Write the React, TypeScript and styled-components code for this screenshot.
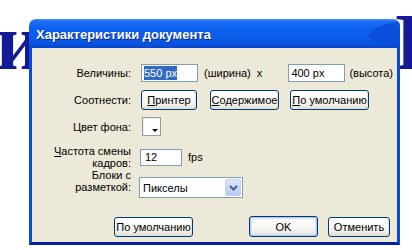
import styled, { createGlobalStyle } from 'styled-components';

const GlobalStyle = createGlobalStyle`
  *, *::before, *::after { box-sizing: border-box; }
  html, body { margin: 0; padding: 0; background: #fff; }
  body {
    font-family: "Liberation Sans", Arial, sans-serif;
    font-size: 11px;
    color: #000;
    overflow: hidden;
  }
`;

const Page = styled.div`
  position: relative;
  width: 412px;
  height: 250px;
  overflow: hidden;
`;

// big heading of the page behind the dialog
const Backdrop = styled.h1`
  display: flex;
  justify-content: space-between;
  margin: 2px 0 0;
  font-family: "Liberation Serif", "Times New Roman", serif;
  font-weight: bold;
  font-size: 80px;
  line-height: 80px;
  color: #141a96;
  span:first-child { margin-left: -4px; }
  span:last-child { margin-right: -32px; }
`;

const Window = styled.div`
  position: absolute;
  left: 29px;
  top: 19px;
  width: 371px;
  display: flex;
  flex-direction: column;
`;

const TitleBar = styled.div`
  position: relative;
  height: 29px;
  display: flex;
  align-items: center;
  padding-left: 7px;
  border-radius: 7px 7px 0 0;
  overflow: hidden;
  background: linear-gradient(
    to bottom,
    #4a93f8 0%,
    #1d6ff3 8%,
    #0d62ef 30%,
    #0a5ae8 70%,
    #0850dc 90%,
    #0743c6 100%
  );
`;

const TitleText = styled.span`
  position: relative;
  font-size: 13px;
  font-weight: bold;
  color: #fff;
  text-shadow: 1px 1px 0 #0b2a8c;
  margin-top: 1px;
`;

const TitleTail = styled.svg`
  position: absolute;
  right: 0;
  top: 0;
`;

const Body = styled.div`
  background: #ece9d8;
  border: 3px solid #0b4bd8;
  border-top: none;
  border-bottom-color: #00209e;
  padding: 16px 7px 5px 0;
`;

const Row = styled.div<{ $top?: number; $align?: string }>`
  display: flex;
  align-items: ${(p) => p.$align ?? 'center'};
  margin-top: ${(p) => p.$top ?? 0}px;
`;

const Label = styled.div`
  flex: none;
  width: 99px;
  margin-right: 10px;
  text-align: right;
  line-height: 12px;
`;

const Text = styled.span<{ $left?: number }>`
  margin-left: ${(p) => p.$left ?? 0}px;
  white-space: pre;
`;

const Field = styled.div<{ $w: number; $h?: number; $left?: number }>`
  flex: none;
  width: ${(p) => p.$w}px;
  height: ${(p) => p.$h ?? 18}px;
  margin-left: ${(p) => p.$left ?? 0}px;
  display: flex;
  align-items: center;
  padding: 0 2px;
  background: #fff;
  border: 1px solid #7f9db9;
`;

const Selected = styled.span`
  background: #316ac5;
  color: #fff;
  line-height: 14px;
`;

const Button = styled.button<{ $w: number; $left?: number; $default?: boolean }>`
  flex: none;
  width: ${(p) => p.$w}px;
  height: ${(p) => (p.$default ? 21 : 20)}px;
  margin-left: ${(p) => p.$left ?? 0}px;
  padding: 0;
  font: 11px "Liberation Sans", Arial, sans-serif;
  color: #000;
  border: 1px solid #003c74;
  border-radius: 3px;
  background: linear-gradient(
    to bottom,
    #ffffff 0%,
    #f8f8f5 45%,
    #efeee8 80%,
    #dcd8cc 100%
  );
  box-shadow: ${(p) =>
    p.$default
      ? 'inset 0 0 0 1px #b4cbf3, inset 0 0 0 2px #d6e2f8'
      : 'inset -1px -1px 0 #e3e0d6'};
  u { text-decoration-thickness: 1px; text-underline-offset: 1px; }
`;

const Swatch = styled.div`
  position: relative;
  width: 19px;
  height: 19px;
  margin-left: 1px;
  background: #fff;
  border: 1px solid #9a9a9a;
  box-shadow: inset 1px 1px 0 #ededed;
  &::after {
    content: '';
    position: absolute;
    right: 2px;
    bottom: 3px;
    border-left: 3px solid transparent;
    border-right: 3px solid transparent;
    border-top: 3px solid #000;
  }
`;

const Select = styled.div`
  flex: none;
  display: flex;
  align-items: center;
  justify-content: space-between;
  width: 104px;
  height: 21px;
  margin: 8px 0 0 -2px;
  padding: 1px 1px 1px 3px;
  background: #fff;
  border: 1px solid #7f9db9;
`;

const DropButton = styled.div`
  width: 16px;
  height: 17px;
  display: flex;
  align-items: center;
  justify-content: center;
  border: 1px solid #c3d0f0;
  border-radius: 2px;
  background: linear-gradient(to bottom, #dfe6fb, #c6d3f7 60%, #b9c8f3);
`;

const Footer = styled.div`
  display: flex;
  align-items: center;
  margin-top: 18px;
  padding-left: 82px;
  gap: 10px;
  & > :nth-child(2) { margin-left: auto; }
`;

export default function App() {
  return (
    <Page>
      <GlobalStyle />
      <Backdrop>
        <span>и</span>
        <span>Р</span>
      </Backdrop>
      <Window>
        <TitleBar>
          <TitleTail width="40" height="29" viewBox="0 0 40 29">
            <path
              d="M8 17 C 14 9, 22 4, 40 3 L40 27 L26 25 C 18 24, 12 21, 8 17 Z"
              fill="#0a4ad4"
              opacity="0.75"
            />
          </TitleTail>
          <TitleText>Характеристики документа</TitleText>
        </TitleBar>
        <Body>
          <Row>
            <Label>Величины:</Label>
            <Field $w={57}>
              <Selected>550 px</Selected>
            </Field>
            <Text $left={6}>(ширина)  x</Text>
            <Field $w={57} $left={26}>400 px</Field>
            <Text $left={4}>(высота)</Text>
          </Row>
          <Row $top={8}>
            <Label>Соотнести:</Label>
            <Button $w={56}>
              <u>П</u>ринтер
            </Button>
            <Button $w={69} $left={13}>
              <u>С</u>одержимое
            </Button>
            <Button $w={79} $left={11}>
              <u>П</u>о умолчанию
            </Button>
          </Row>
          <Row $top={7}>
            <Label>Цвет фона:</Label>
            <Swatch />
          </Row>
          <Row $top={9}>
            <Label>
              <u>Ч</u>астота смены
              <br />
              кадров:
            </Label>
            <Field $w={42} $h={17} $left={-1}>
              <Text $left={2}>12</Text>
            </Field>
            <Text $left={6}>fps</Text>
          </Row>
          <Row $align="flex-start">
            <Label>
              Блоки с
              <br />
              разметкой:
            </Label>
            <Select>
              <span>Пикселы</span>
              <DropButton>
                <svg width="9" height="6" viewBox="0 0 9 6">
                  <path
                    d="M1 1 L4.5 4.5 L8 1"
                    fill="none"
                    stroke="#4d6185"
                    strokeWidth="2"
                  />
                </svg>
              </DropButton>
            </Select>
          </Row>
          <Footer>
            <Button $w={79}>По умолчанию</Button>
            <Button $w={69} $default>
              OK
            </Button>
            <Button $w={62}>Отменить</Button>
          </Footer>
        </Body>
      </Window>
    </Page>
  );
}
